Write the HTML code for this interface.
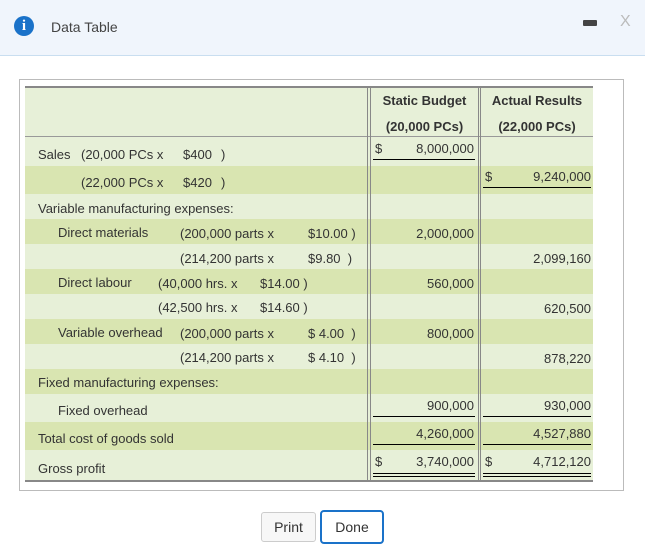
<!DOCTYPE html>
<html><head><meta charset="utf-8"><style>
*{margin:0;padding:0;box-sizing:border-box}
body{width:645px;height:552px;background:#fff;font-family:"Liberation Sans",Arial,sans-serif;color:#333;position:relative;overflow:hidden}
.a{position:absolute;white-space:nowrap;font-size:13px;line-height:14px}
.r{position:absolute;left:25px;width:568px}
.L{background:#e7f0d8}.D{background:#d9e5b1}
.vl{position:absolute;top:86px;height:396px;width:1px;background:#888}
.ul{position:absolute;height:1px;background:#000}
.num{position:absolute;text-align:right;font-size:13px;line-height:14px;white-space:nowrap}
</style></head><body>
<div style="position:absolute;left:0;top:0;width:645px;height:56px;background:#f0f5fc;border-bottom:1px solid #c9def0"></div>
<div style="position:absolute;left:14px;top:16px;width:20px;height:20px;border-radius:50%;background:#1a72c9;color:#fff;font:bold 15px/20px 'Liberation Serif',serif;text-align:center">i</div>
<div class="a" style="left:51px;top:19px;font-size:14px;line-height:16px;color:#444">Data Table</div>
<div style="position:absolute;left:583px;top:20px;width:14px;height:6px;background:#444;border-radius:1px"></div>
<div class="a" style="left:620px;top:13px;font-size:16px;line-height:18px;color:#bbb">X</div>

<div style="position:absolute;left:19px;top:79px;width:605px;height:412px;border:1px solid #bbb"></div>

<div class="r L" style="top:86px;height:51px;border-top:2px solid #888;border-bottom:1px solid #999"></div>
<div class="r L" style="top:137px;height:29px"></div>
<div class="r D" style="top:166px;height:28px"></div>
<div class="r L" style="top:194px;height:25px"></div>
<div class="r D" style="top:219px;height:25px"></div>
<div class="r L" style="top:244px;height:25px"></div>
<div class="r D" style="top:269px;height:25px"></div>
<div class="r L" style="top:294px;height:25px"></div>
<div class="r D" style="top:319px;height:25px"></div>
<div class="r L" style="top:344px;height:25px"></div>
<div class="r D" style="top:369px;height:25px"></div>
<div class="r L" style="top:394px;height:28px"></div>
<div class="r D" style="top:422px;height:28px"></div>
<div class="r L" style="top:450px;border-bottom:2px solid #888;height:32px"></div>

<div class="vl" style="left:367px"></div><div class="vl" style="left:370px"></div>
<div class="vl" style="left:478px"></div><div class="vl" style="left:480px"></div>

<div class="a" style="left:371px;top:94px;width:107px;text-align:center;font-weight:bold">Static Budget</div>
<div class="a" style="left:371px;top:120px;width:107px;text-align:center;font-weight:bold">(20,000 PCs)</div>
<div class="a" style="left:481px;top:94px;width:112px;text-align:center;font-weight:bold">Actual Results</div>
<div class="a" style="left:481px;top:120px;width:112px;text-align:center;font-weight:bold">(22,000 PCs)</div>

<div class="a" style="left:38px;top:148px">Sales</div>
<div class="a" style="left:81px;top:148px">(20,000 PCs x</div>
<div class="a" style="left:183px;top:148px">$400</div>
<div class="a" style="left:221px;top:148px">)</div>
<div class="a" style="left:81px;top:176px">(22,000 PCs x</div>
<div class="a" style="left:183px;top:176px">$420</div>
<div class="a" style="left:221px;top:176px">)</div>
<div class="a" style="left:38px;top:202px">Variable manufacturing expenses:</div>
<div class="a" style="left:58px;top:226px">Direct materials</div>
<div class="a" style="left:180px;top:227px">(200,000 parts x</div>
<div class="a" style="left:308px;top:227px">$10.00 )</div>
<div class="a" style="left:180px;top:252px">(214,200 parts x</div>
<div class="a" style="left:308px;top:252px">$9.80 &nbsp;)</div>
<div class="a" style="left:58px;top:276px">Direct labour</div>
<div class="a" style="left:158px;top:277px">(40,000 hrs. x</div>
<div class="a" style="left:260px;top:277px">$14.00 )</div>
<div class="a" style="left:158px;top:301px">(42,500 hrs. x</div>
<div class="a" style="left:260px;top:301px">$14.60 )</div>
<div class="a" style="left:58px;top:326px">Variable overhead</div>
<div class="a" style="left:180px;top:327px">(200,000 parts x</div>
<div class="a" style="left:308px;top:327px">$ 4.00 &nbsp;)</div>
<div class="a" style="left:180px;top:351px">(214,200 parts x</div>
<div class="a" style="left:308px;top:351px">$ 4.10 &nbsp;)</div>
<div class="a" style="left:38px;top:376px">Fixed manufacturing expenses:</div>
<div class="a" style="left:58px;top:404px">Fixed overhead</div>
<div class="a" style="left:38px;top:432px">Total cost of goods sold</div>
<div class="a" style="left:38px;top:462px">Gross profit</div>

<div class="a" style="left:375px;top:142px">$</div>
<div class="num" style="right:171px;top:142px">8,000,000</div>
<div class="ul" style="left:373px;width:102px;top:159px"></div>
<div class="a" style="left:485px;top:170px">$</div>
<div class="num" style="right:54px;top:170px">9,240,000</div>
<div class="ul" style="left:483px;width:108px;top:187px"></div>
<div class="num" style="right:171px;top:227px">2,000,000</div>
<div class="num" style="right:54px;top:252px">2,099,160</div>
<div class="num" style="right:171px;top:277px">560,000</div>
<div class="num" style="right:54px;top:302px">620,500</div>
<div class="num" style="right:171px;top:327px">800,000</div>
<div class="num" style="right:54px;top:352px">878,220</div>
<div class="num" style="right:171px;top:399px">900,000</div>
<div class="num" style="right:54px;top:399px">930,000</div>
<div class="ul" style="left:373px;width:102px;top:416px"></div>
<div class="ul" style="left:483px;width:108px;top:416px"></div>
<div class="num" style="right:171px;top:427px">4,260,000</div>
<div class="num" style="right:54px;top:427px">4,527,880</div>
<div class="ul" style="left:373px;width:102px;top:444px"></div>
<div class="ul" style="left:483px;width:108px;top:444px"></div>
<div class="a" style="left:375px;top:455px">$</div>
<div class="num" style="right:171px;top:455px">3,740,000</div>
<div class="a" style="left:485px;top:455px">$</div>
<div class="num" style="right:54px;top:455px">4,712,120</div>
<div class="ul" style="left:373px;width:102px;top:473px"></div>
<div class="ul" style="left:373px;width:102px;top:476px"></div>
<div class="ul" style="left:483px;width:108px;top:473px"></div>
<div class="ul" style="left:483px;width:108px;top:476px"></div>

<div style="position:absolute;left:261px;top:512px;width:55px;height:30px;border:1px solid #ccc;border-radius:3px;background:#f7f7f7;font-size:14px;line-height:28px;text-align:center;color:#333">Print</div>
<div style="position:absolute;left:320px;top:510px;width:64px;height:34px;border:2px solid #1a72c9;border-radius:4px;background:#fff;font-size:14px;line-height:30px;text-align:center;color:#333">Done</div>
</body></html>
